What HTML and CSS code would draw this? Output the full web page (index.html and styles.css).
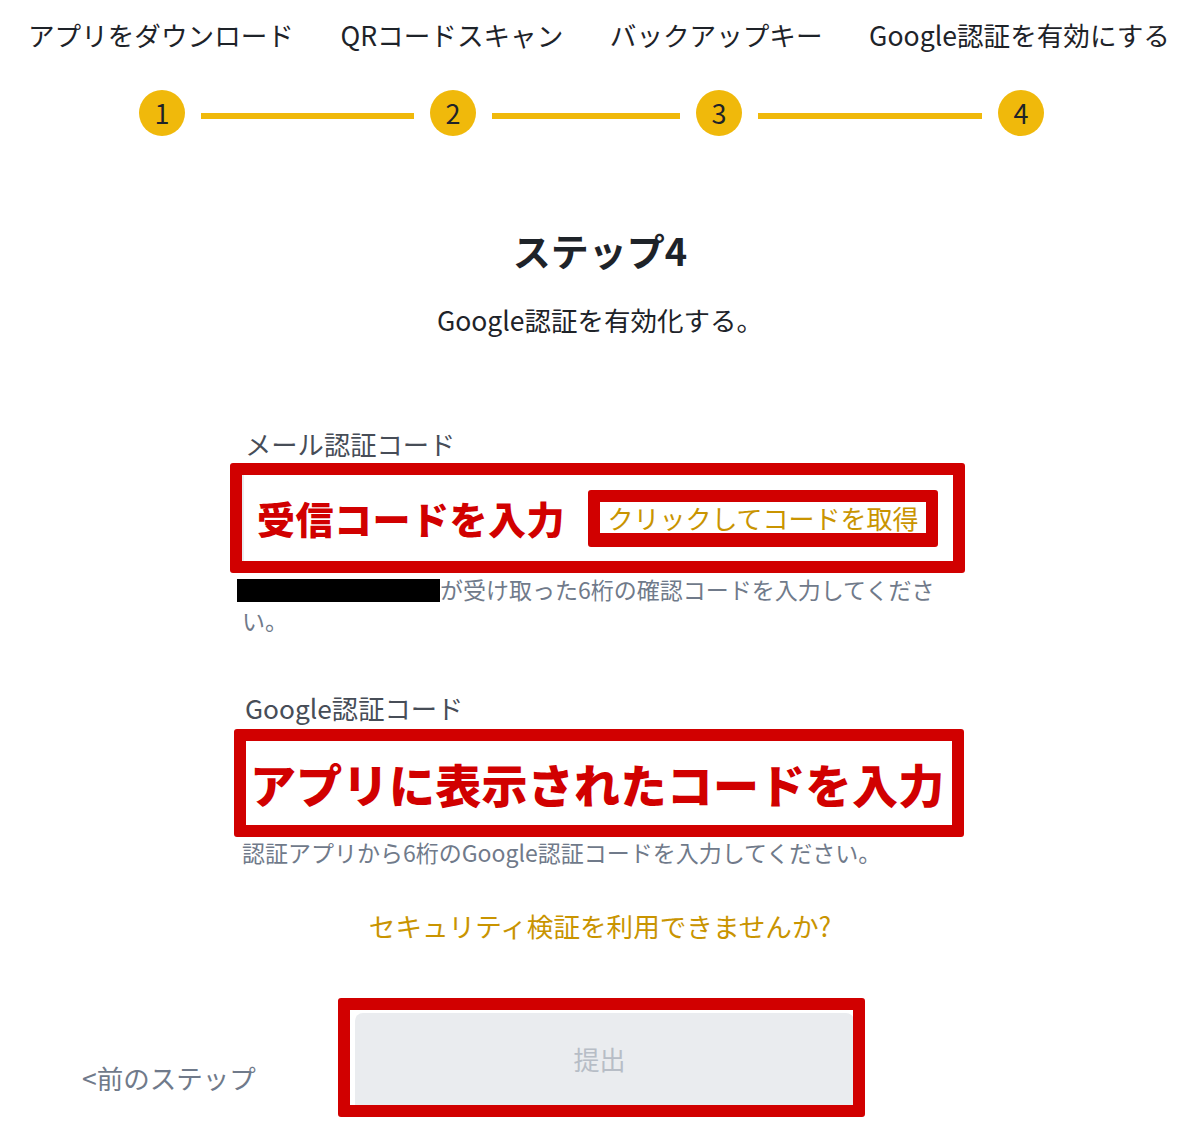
FILE: index.html
```html
<!DOCTYPE html>
<html lang="ja">
<head>
<meta charset="utf-8">
<title>Google認証を有効にする</title>
<link rel="stylesheet" href="styles.css">
</head>
<body>
<div class="page">
  <nav class="tabs">
    <span class="tab">アプリをダウンロード</span>
    <span class="tab">QRコードスキャン</span>
    <span class="tab">バックアップキー</span>
    <span class="tab">Google認証を有効にする</span>
  </nav>
  <div class="stepper">
    <span class="dot">1</span>
    <span class="line line-a"></span>
    <span class="dot">2</span>
    <span class="line line-b"></span>
    <span class="dot">3</span>
    <span class="line line-c"></span>
    <span class="dot">4</span>
  </div>

  <h1 class="title">ステップ4</h1>
  <p class="subtitle">Google認証を有効化する。</p>

  <form class="form">
    <div class="label first">メール認証コード</div>
    <div class="anno anno-email">
      <div class="input-inner">
        <span class="red-text">受信コードを入力</span>
        <span class="anno-small"><span class="get-code">クリックしてコードを取得</span></span>
      </div>
    </div>
    <p class="helper helper-email"><span class="redact"></span>が受け取った6桁の確認コードを入力してください。</p>

    <div class="label second">Google認証コード</div>
    <div class="anno anno-google">
      <div class="input-inner2">
        <span class="red-text big">アプリに表示されたコードを入力</span>
      </div>
    </div>
    <p class="helper helper-google">認証アプリから6桁のGoogle認証コードを入力してください。</p>
  </form>

  <p class="trouble">セキュリティ検証を利用できませんか?</p>

  <div class="actions">
    <span class="back">&lt;前のステップ</span>
    <div class="anno anno-btn">
      <div class="submit">提出</div>
    </div>
  </div>
</div>
</body>
</html>
```

FILE: styles.css
```css
* { box-sizing: border-box; }
html, body { margin: 0; padding: 0; background: #fff; }
body {
  font-family: "Noto Sans CJK JP", "Noto Sans", sans-serif;
  color: #1e2329;
  width: 1200px;
  height: 1136px;
  overflow: hidden;
}
.page { width: 1200px; }

.tabs {
  display: flex;
  justify-content: space-between;
  padding: 16px 30px 0 28px;
  height: 54px;
}
.tab {
  font-size: 26.6px;
  line-height: 38px;
  color: #1e2329;
  white-space: nowrap;
}

.stepper {
  display: flex;
  align-items: flex-start;
  padding-left: 139px;
  margin-top: 36px;
  height: 46px;
}
.dot {
  width: 46px;
  height: 46px;
  border-radius: 50%;
  background: #f0b90b;
  color: #1e2329;
  font-size: 27px;
  line-height: 46px;
  text-align: center;
  flex: none;
}
.line {
  height: 6px;
  background: #f0b90b;
  margin: 23px 16px 0;
  flex: none;
}
.line-a { width: 213px; }
.line-b { width: 188px; }
.line-c { width: 224px; }

.title {
  margin: 89px 0 0;
  text-align: center;
  font-size: 38px;
  line-height: 50px;
  font-weight: 700;
  color: #1e2329;
}
.subtitle {
  margin: 27px 0 0;
  text-align: center;
  font-size: 26.5px;
  line-height: 36px;
  color: #1e2329;
}

.form {
  width: 710px;
  margin: 88px 0 0 242px;
}
.label {
  font-size: 26.3px;
  line-height: 36px;
  color: #474d57;
  padding-left: 3px;
}
.anno {
  border: 12px solid #d10000;
  border-radius: 3px;
  background: #fff;
}
.anno-email {
  margin: 1px 0 0 -12px;
  width: 735px;
  height: 110px;
}
.input-inner {
  height: 86px;
  display: flex;
  align-items: center;
  border-left: 2px solid #eaecef;
  padding-left: 13px;
}
.red-text {
  color: #d10000;
  font-weight: 900;
  font-size: 38px;
  line-height: 44px;
  white-space: nowrap;
  letter-spacing: 0.5px;
}
.anno-small {
  margin-left: 23px;
  border: 12px solid #d10000;
  border-bottom-width: 14px;
  border-radius: 3px;
  width: 350px;
  height: 57px;
  display: flex;
  align-items: center;
  justify-content: center;
  background: #d10000;
}
.get-code {
  background: #fff;
  color: #c99400;
  font-size: 26px;
  line-height: 31px;
  width: 326px;
  text-align: center;
  white-space: nowrap;
  display: block;
  height: 31px;
}
.helper {
  margin: 0;
  font-size: 23px;
  line-height: 31px;
  color: #707a8a;
}
.helper-email { margin-top: 1px; }
.redact {
  display: inline-block;
  width: 203px;
  height: 23px;
  background: #000;
  margin-left: -5px;
  vertical-align: -3px;
}
.label.second { margin-top: 54px; }
.anno-google {
  margin: 3px 0 0 -8px;
  width: 730px;
  height: 108px;
}
.input-inner2 {
  height: 84px;
  display: flex;
  align-items: center;
  padding-left: 4px;
}
.red-text.big {
  font-size: 46px;
  line-height: 56px;
  letter-spacing: 0.3px;
}
.helper-google { margin-top: 0; }

.trouble {
  margin: 40px 0 0;
  text-align: center;
  font-size: 26.6px;
  line-height: 36px;
  color: #c99400;
}

.actions {
  display: flex;
  align-items: flex-start;
  margin-top: 54px;
  padding-left: 82px;
}
.back {
  font-size: 26.5px;
  line-height: 36px;
  color: #707a8a;
  margin-top: 62px;
  width: 256px;
  white-space: nowrap;
}
.anno-btn {
  width: 527px;
  height: 119px;
  padding: 3px 0 0 5px;
  overflow: hidden;
}
.submit {
  width: 499px;
  height: 100px;
  background: #eaecef;
  border-radius: 8px;
  color: #b7bdc6;
  font-size: 26px;
  display: flex;
  align-items: center;
  justify-content: center;
  padding: 0 10px 10px 0;
}
```
